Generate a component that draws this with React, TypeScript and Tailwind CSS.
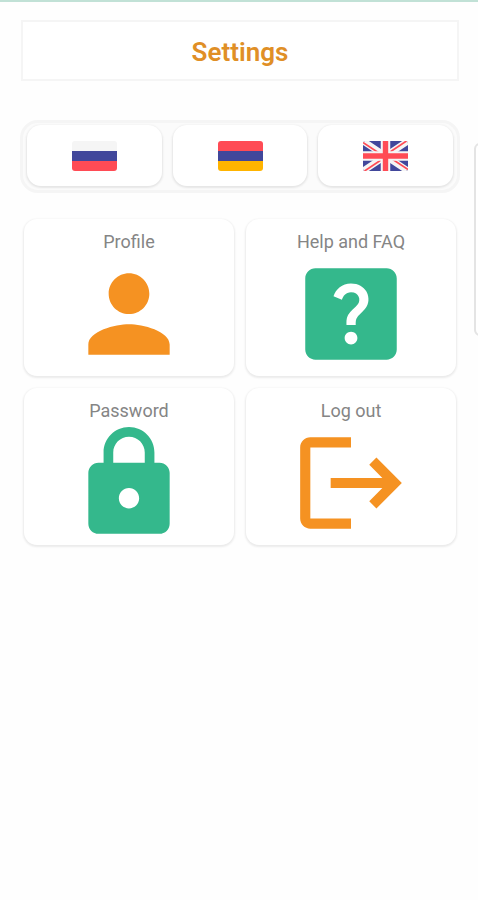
import type { ReactNode } from "react";
import { MdHelpCenter, MdLock, MdLogout, MdPerson } from "react-icons/md";

function RussianFlag() {
  return (
    <svg viewBox="0 0 45 30" className="h-[30px] w-[45px]" aria-hidden="true">
      <path d="M3 0H42Q45 0 45 3V10H0V3Q0 0 3 0Z" fill="#f5f5f5" />
      <path d="M0 10H45V20H0Z" fill="#41479b" />
      <path d="M0 20H45V27Q45 30 42 30H3Q0 30 0 27Z" fill="#ff4b55" />
    </svg>
  );
}

function ArmenianFlag() {
  return (
    <svg viewBox="0 0 45 30" className="h-[30px] w-[45px]" aria-hidden="true">
      <path d="M3 0H42Q45 0 45 3V10H0V3Q0 0 3 0Z" fill="#ff4b55" />
      <path d="M0 10H45V20H0Z" fill="#41479b" />
      <path d="M0 20H45V27Q45 30 42 30H3Q0 30 0 27Z" fill="#ffb400" />
    </svg>
  );
}

function BritishFlag() {
  return (
    <svg viewBox="0 0 45 30" className="h-[30px] w-[45px]" aria-hidden="true">
      <clipPath id="uk-outline">
        <rect width="45" height="30" rx="2.5" />
      </clipPath>
      <g clipPath="url(#uk-outline)">
        <rect width="45" height="30" fill="#41479b" />
        <path d="M0 0L45 30M45 0L0 30" stroke="#f5f5f5" strokeWidth="6.5" />
        <path
          d="M-0.6 1L22 16M22.5 14L45.6 -1.4M23 14L45.6 29M22.5 16L-0.6 31.4"
          stroke="#ff4b55"
          strokeWidth="1.7"
        />
        <path d="M22.5 0V30M0 15H45" stroke="#f5f5f5" strokeWidth="9.5" />
        <path d="M22.5 0V30M0 15H45" stroke="#ff4b55" strokeWidth="5.4" />
      </g>
    </svg>
  );
}

const languages = [
  { name: "Русский", flag: <RussianFlag /> },
  { name: "Հայերեն", flag: <ArmenianFlag /> },
  { name: "English", flag: <BritishFlag /> },
];

const cards: { label: string; icon: ReactNode; color: string }[] = [
  { label: "Profile", icon: <MdPerson size={122} />, color: "text-[#f59222]" },
  { label: "Help and FAQ", icon: <MdHelpCenter size={122} />, color: "text-[#34b88c]" },
  { label: "Password", icon: <MdLock size={122} />, color: "text-[#34b88c]" },
  { label: "Log out", icon: <MdLogout size={122} />, color: "text-[#f59222]" },
];

export default function App() {
  return (
    <main className="relative min-h-screen overflow-hidden border-t-2 border-[#c1e1d6] bg-[#fefefe] pt-[18px] pr-[19px] pl-[21px] font-[Roboto,sans-serif]">
      <header className="flex h-[61px] items-center justify-center border-2 border-[#f5f5f5] bg-white pt-[2px]">
        <h1 className="text-[26px] leading-8 font-semibold text-[#e08f26]">Settings</h1>
      </header>

      <div className="mt-[39px] -mr-px -ml-px flex gap-[11px] rounded-[18px] border-3 border-[#f5f5f5] bg-[#fbfbfb] px-1 pt-[2px] pb-1">
        {languages.map(({ name, flag }) => (
          <button
            key={name}
            aria-label={name}
            className="flex h-[61px] flex-1 items-center justify-center rounded-[14px] bg-white shadow-[0_1px_2px_1px_#e6e6e6]"
          >
            {flag}
          </button>
        ))}
      </div>

      <nav className="mt-[26px] grid grid-cols-2 gap-3 px-[3px]">
        {cards.map(({ label, icon, color }) => (
          <button
            key={label}
            className="flex flex-col items-center rounded-[13px] bg-white pt-3 pb-px shadow-[0_1px_2px_1px_#ebebeb]"
          >
            <span className="text-lg leading-[22px] text-[#858585]">{label}</span>
            <span className={color}>{icon}</span>
          </button>
        ))}
      </nav>

      <div className="absolute top-[141px] -right-2 h-[193px] w-3 rounded-lg border-2 border-[#e4e4e4] bg-white" />
    </main>
  );
}
